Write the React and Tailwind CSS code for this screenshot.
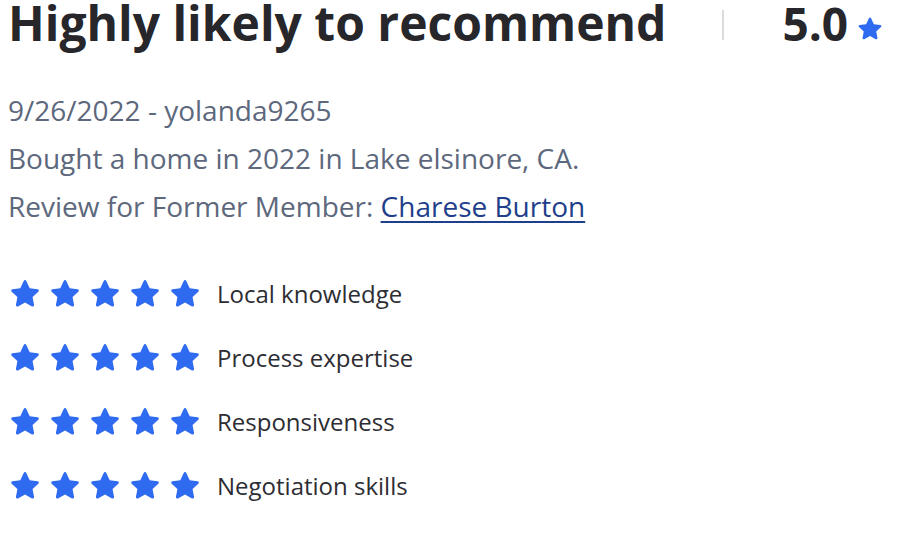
function Star({ className }) {
  return (
    <svg viewBox="0 0 24 24" className={className} fill="currentColor">
      <path d="M12 2.2c.4 0 .75.23.92.6l2.4 5.1 5.55.68c.4.05.72.32.84.7.12.38.01.8-.28 1.07l-4.1 3.8 1.07 5.5c.08.39-.08.79-.4 1.02-.32.23-.75.26-1.1.07L12 18.02l-4.9 2.72c-.35.19-.78.16-1.1-.07-.32-.23-.48-.63-.4-1.02l1.07-5.5-4.1-3.8c-.29-.27-.4-.69-.28-1.07.12-.38.44-.65.84-.7l5.55-.68 2.4-5.1c.17-.37.52-.6.92-.6z" />
    </svg>
  );
}

const ratings = [
  "Local knowledge",
  "Process expertise",
  "Responsiveness",
  "Negotiation skills",
];

export default function App() {
  return (
    <div className="w-[904px] h-[540px] bg-white overflow-hidden font-['Open_Sans',sans-serif] px-2">
      <div className="flex items-center h-[46px]">
        <h1 className="text-[48px] font-bold text-[#26262b] leading-[44px]">
          Highly likely to recommend
        </h1>
        <div className="w-[2px] h-[30px] bg-[#dcdcdf] ml-[56px] mt-1" />
        <div className="flex items-end ml-[58px]">
          <span className="text-[46px] font-bold text-[#26262b] leading-[44px]">5.0</span>
          <Star className="w-[28px] h-[28px] text-[#2f6bf0] ml-[8px] mb-[2px]" />
        </div>
      </div>

      <div className="mt-[40px] flex flex-col text-[28px] text-[#5d687d] leading-[48px]">
        <p>9/26/2022 - yolanda9265</p>
        <p>Bought a home in 2022 in Lake elsinore, CA.</p>
        <p>
          Review for Former Member:{" "}
          <a href="#" className="text-[#1f3f8c] underline underline-offset-4">
            Charese Burton
          </a>
        </p>
      </div>

      <div className="mt-[46px] flex flex-col gap-[28px]">
        {ratings.map((r) => (
          <div key={r} className="flex items-center h-[36px]">
            <div className="flex gap-[6px]">
              {[0, 1, 2, 3, 4].map((i) => (
                <Star key={i} className="w-[34px] h-[34px] text-[#2f6bf0]" />
              ))}
            </div>
            <span className="ml-[15px] text-[24px] text-[#2d2d33]">{r}</span>
          </div>
        ))}
      </div>
    </div>
  );
}
